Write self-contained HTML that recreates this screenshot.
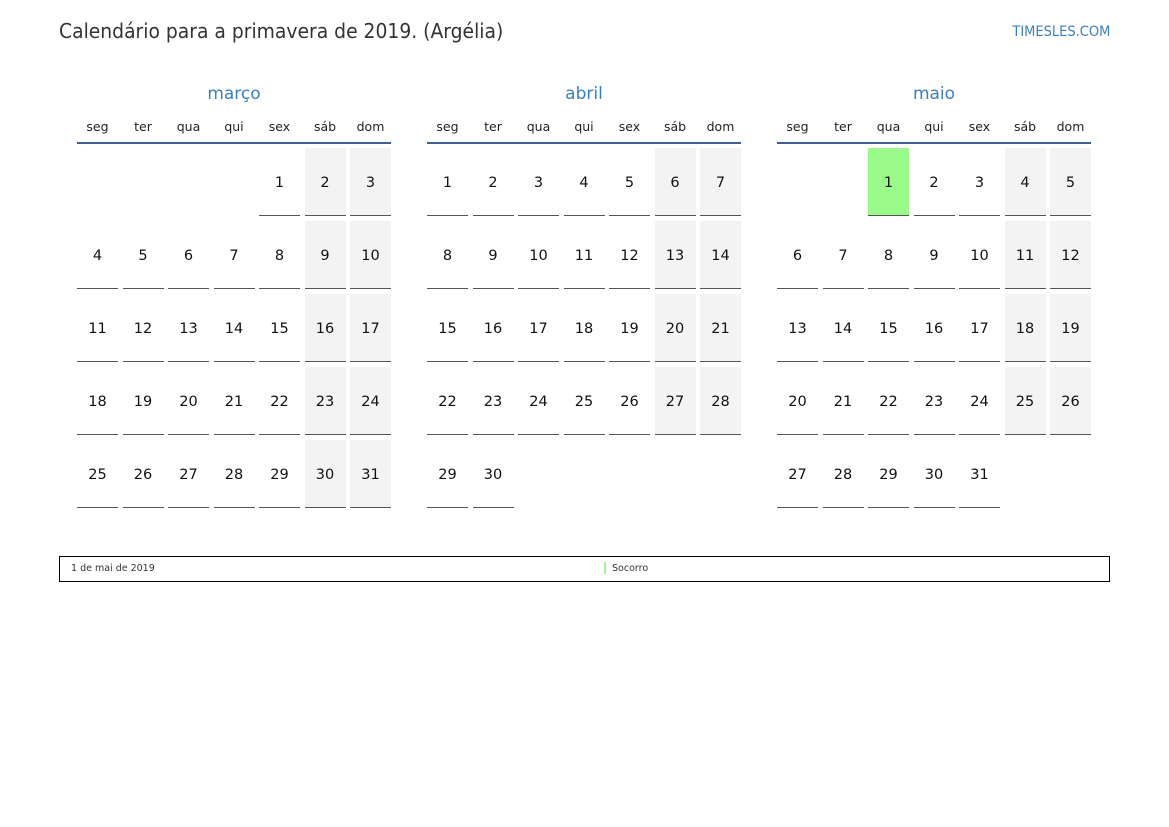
<!DOCTYPE html>
<html><head><meta charset="utf-8">
<style>
body{margin:0;width:1169px;height:827px;background:#fff;position:relative;font-family:"DejaVu Sans","Liberation Sans",sans-serif;overflow:hidden}
.t{position:absolute;left:59px;top:19px;font-size:20px;color:#333;transform:scaleX(0.937);transform-origin:0 0;white-space:nowrap}
.site{position:absolute;right:59px;top:24px;font-size:14px;color:#3a7fc1;transform:scaleX(0.93);transform-origin:100% 0;white-space:nowrap}
.m{position:absolute;width:314px;text-align:center;top:84px;font-size:17px;color:#3a7fc1}
.dn{position:absolute;width:42px;text-align:center;top:119px;font-size:12.5px;color:#222}
.hl{position:absolute;height:2px;width:314px;top:142px;background:#3d5f8f}
.c{position:absolute;width:41px;height:67px;border-bottom:1px solid #555;text-align:center;line-height:70px;font-size:14.5px;color:#111}
.w{background:#f3f3f3}
.h{background:#9afa8a}
.leg{position:absolute;left:59px;top:556px;width:1049px;height:24px;border:1px solid #000;font-size:9.5px;color:#333}
</style></head><body>
<div class="t">Calendário para a primavera de 2019. (Argélia)</div>
<div class="site">TIMESLES.COM</div>
<div class="leg"><span style="position:absolute;left:11px;top:6px">1 de mai de 2019</span><span style="position:absolute;left:544px;top:5px;width:2px;height:12px;background:#9afa8a"></span><span style="position:absolute;left:552px;top:6px">Socorro</span></div>
<div id="root"></div>
<script>
var months=[["março",4,31],["abril",0,30],["maio",2,31]];
var dn=["seg","ter","qua","qui","sex","sáb","dom"];
var h="";
months.forEach(function(m,mi){
 var x0=77+mi*350;
 h+='<div class="m" style="left:'+x0+'px">'+m[0]+'</div>';
 h+='<div class="hl" style="left:'+x0+'px"></div>';
 for(var i=0;i<7;i++)h+='<div class="dn" style="left:'+(x0+i*45.5-0.5)+'px">'+dn[i]+'</div>';
 for(var d=1;d<=m[2];d++){
  var p=m[1]+d-1,c=p%7,r=Math.floor(p/7);
  var cls="c"+(c>=5?" w":"")+(mi==2&&d==1?" h":"");
  h+='<div class="'+cls+'" style="left:'+(x0+c*45.5)+'px;top:'+(148+r*73)+'px">'+d+'</div>';
 }
});
document.getElementById("root").innerHTML=h;
</script>
</body></html>
